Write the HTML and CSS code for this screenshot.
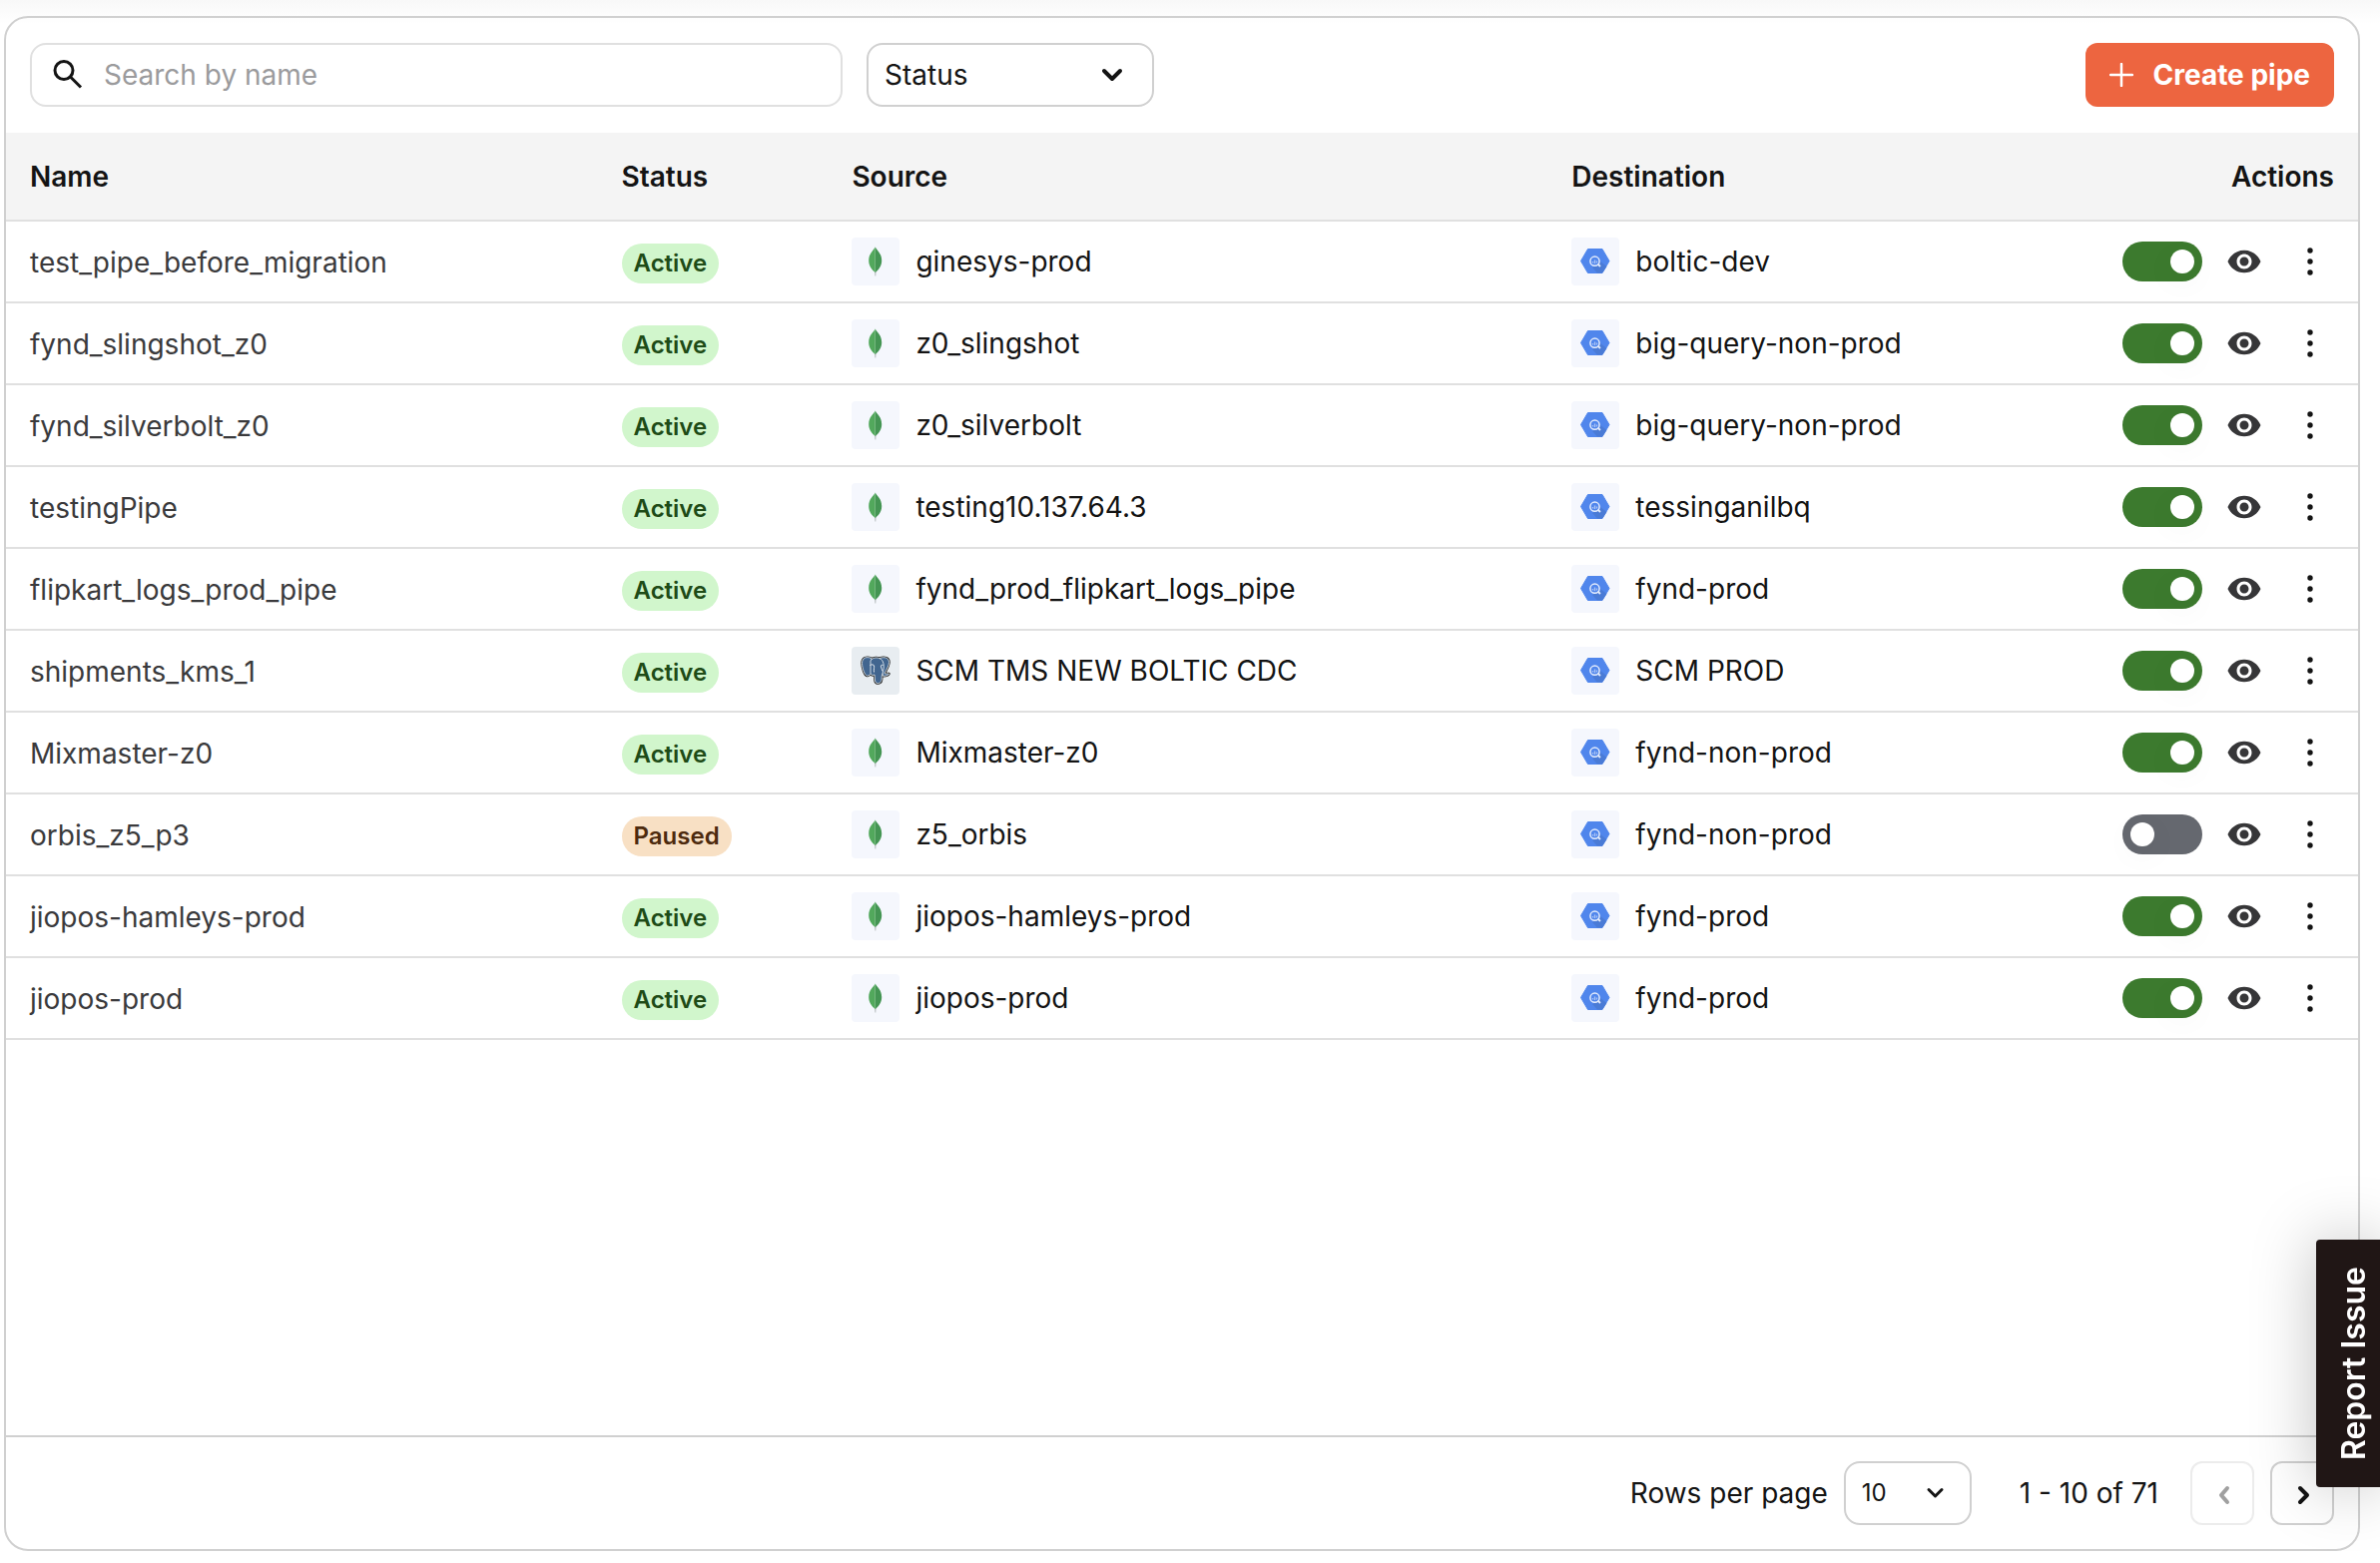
FILE: index.html
```html
<!DOCTYPE html>
<html lang="en">
<head>
<meta charset="utf-8">
<meta name="viewport" content="width=device-width, initial-scale=1">
<title>Pipes</title>
<link rel="stylesheet" href="styles.css">
</head>
<body>
<svg class="sprite" aria-hidden="true">
  <symbol id="mongo" viewBox="0 0 48 48">
    <path d="M23 34h1.600l-.3 4.500h-.9z" fill="#b9bec0"/>
    <path d="M23.700 9.500c1.500 3.500 6.500 6 6.500 13.500 0 6-3.500 9.500-6.500 12z" fill="#449553"/>
    <path d="M23.700 9.500c-1.500 3.500-6.500 6-6.500 13.500 0 6 3.500 9.500 6.500 12z" fill="#52a85c"/>
  </symbol>
  <symbol id="bigquery" viewBox="0 0 48 48">
    <path d="M16.500 11.500h14.500l7 12-7 12H16.500l-7-12z" fill="#5086ec" stroke="#5086ec" stroke-linejoin="round"/>
    <path d="M28 27l1-3 6.500 5-4.500 6.500h-5l-5-5.500z" fill="#4a7bd6"/>
    <circle cx="23.500" cy="23.700" r="4.600" fill="none" stroke="#e4ecfc" stroke-width="1.500"/>
    <path d="M26.500 26.500l2.500 2.500" stroke="#e4ecfc" stroke-width="1.800"/>
    <path d="M21.500 24v1.500M23.500 22.500v3.500M25.500 23.500v2" stroke="#a9c3f5" stroke-width="1.300"/>
  </symbol>
  <symbol id="postgres" viewBox="0 0 48 48">
    <g fill="#41658f" stroke="#1c1c1c" stroke-width="2.400" stroke-linejoin="round">
      <path d="M20 11.500c-5-2-9.500-.8-9.500 5 0 4.500 2.500 12 5 12.500 1.500.5 3.500-1.500 5-3z"/>
      <path d="M28 11.500c5-1.800 9.500-.5 9.500 4 0 3.500-2.300 7-4.500 11 1.300.8 3 .3 4.500.5-.8 2-3.500 2.300-6 2.300z"/>
      <path d="M19 14c2-4 9-4 11.500-.5 2.500 3.500 2 9 .5 13-.8 2-.8 3-.8 5.500 0 5.500-6.200 6-6.700 2l-.5-6c-2 1-4.500 0-4-2z"/>
    </g>
    <g fill="#41658f" stroke="#eef2f5" stroke-width=".8" stroke-linejoin="round">
      <path d="M20 11.500c-5-2-9.500-.8-9.500 5 0 4.500 2.500 12 5 12.500 1.500.5 3.500-1.500 5-3z"/>
      <path d="M28 11.500c5-1.800 9.500-.5 9.500 4 0 3.500-2.300 7-4.500 11 1.300.8 3 .3 4.500.5-.8 2-3.500 2.300-6 2.300z"/>
      <path d="M19 14c2-4 9-4 11.500-.5 2.500 3.500 2 9 .5 13-.8 2-.8 3-.8 5.500 0 5.500-6.200 6-6.700 2l-.5-6c-2 1-4.500 0-4-2z"/>
    </g>
    <path d="M18.500 18.500c1.500-1 3.500-1 4 .5s-.5 3.500 0 6.500M31.500 18.500c-1.500-.5-2.500 0-2 1.500.3 1.800 1.200 2.800 1.500 4.500" fill="none" stroke="#eef2f5" stroke-width=".9"/>
  </symbol>
  <symbol id="eye" viewBox="0 0 24 24">
    <path d="M12 4.500C7 4.500 2.730 7.610 1 12c1.730 4.390 6 7.500 11 7.500s9.270-3.110 11-7.500c-1.730-4.390-6-7.500-11-7.500zM12 17c-2.760 0-5-2.240-5-5s2.240-5 5-5 5 2.240 5 5-2.240 5-5 5zm0-8c-1.660 0-3 1.340-3 3s1.340 3 3 3 3-1.340 3-3-1.340-3-3-3z"/>
  </symbol>
  <symbol id="dots" viewBox="0 0 48 48">
    <circle cx="24" cy="13" r="2.700"/><circle cx="24" cy="24" r="2.700"/><circle cx="24" cy="35" r="2.700"/>
  </symbol>
</svg>

<main class="card">
  <div class="toolbar">
    <label class="search">
      <svg class="search-icon" viewBox="0 0 32 32" aria-hidden="true"><circle cx="12" cy="11.500" r="9" /><path d="M18.500 18l10.500 10.500"/></svg>
      <input class="search-input" type="text" placeholder="Search by name" aria-label="Search by name">
    </label>
    <div class="select select-status">
      <select aria-label="Status"><option>Status</option></select>
      <svg class="chevron" viewBox="0 0 24 24" aria-hidden="true"><path d="M4 8l8 8 8-8"/></svg>
    </div>
    <button class="create" type="button">
      <svg class="plus" viewBox="0 0 24 24" aria-hidden="true"><path d="M12 1v22M1 12h22"/></svg>
      Create pipe
    </button>
  </div>

  <div class="table-area">
    <table class="pipes">
      <colgroup><col class="col-name"><col class="col-status"><col class="col-source"><col class="col-dest"><col></colgroup>
      <thead>
        <tr><th>Name</th><th>Status</th><th>Source</th><th>Destination</th><th class="right">Actions</th></tr>
      </thead>
      <tbody>
        <tr>
          <td class="name">test_pipe_before_migration</td>
          <td><span class="badge active">Active</span></td>
          <td><div class="conn"><svg class="logo"><use href="#mongo"/></svg>ginesys-prod</div></td>
          <td><div class="conn"><svg class="logo"><use href="#bigquery"/></svg>boltic-dev</div></td>
          <td><div class="actions"><input class="toggle" type="checkbox" checked aria-label="Enable pipe"><button class="icon-btn view" type="button" aria-label="View"><svg><use href="#eye"/></svg></button><button class="icon-btn more" type="button" aria-label="More"><svg><use href="#dots"/></svg></button></div></td>
        </tr>
        <tr>
          <td class="name">fynd_slingshot_z0</td>
          <td><span class="badge active">Active</span></td>
          <td><div class="conn"><svg class="logo"><use href="#mongo"/></svg>z0_slingshot</div></td>
          <td><div class="conn"><svg class="logo"><use href="#bigquery"/></svg>big-query-non-prod</div></td>
          <td><div class="actions"><input class="toggle" type="checkbox" checked aria-label="Enable pipe"><button class="icon-btn view" type="button" aria-label="View"><svg><use href="#eye"/></svg></button><button class="icon-btn more" type="button" aria-label="More"><svg><use href="#dots"/></svg></button></div></td>
        </tr>
        <tr>
          <td class="name">fynd_silverbolt_z0</td>
          <td><span class="badge active">Active</span></td>
          <td><div class="conn"><svg class="logo"><use href="#mongo"/></svg>z0_silverbolt</div></td>
          <td><div class="conn"><svg class="logo"><use href="#bigquery"/></svg>big-query-non-prod</div></td>
          <td><div class="actions"><input class="toggle" type="checkbox" checked aria-label="Enable pipe"><button class="icon-btn view" type="button" aria-label="View"><svg><use href="#eye"/></svg></button><button class="icon-btn more" type="button" aria-label="More"><svg><use href="#dots"/></svg></button></div></td>
        </tr>
        <tr>
          <td class="name">testingPipe</td>
          <td><span class="badge active">Active</span></td>
          <td><div class="conn"><svg class="logo"><use href="#mongo"/></svg>testing10.137.64.3</div></td>
          <td><div class="conn"><svg class="logo"><use href="#bigquery"/></svg>tessinganilbq</div></td>
          <td><div class="actions"><input class="toggle" type="checkbox" checked aria-label="Enable pipe"><button class="icon-btn view" type="button" aria-label="View"><svg><use href="#eye"/></svg></button><button class="icon-btn more" type="button" aria-label="More"><svg><use href="#dots"/></svg></button></div></td>
        </tr>
        <tr>
          <td class="name">flipkart_logs_prod_pipe</td>
          <td><span class="badge active">Active</span></td>
          <td><div class="conn"><svg class="logo"><use href="#mongo"/></svg>fynd_prod_flipkart_logs_pipe</div></td>
          <td><div class="conn"><svg class="logo"><use href="#bigquery"/></svg>fynd-prod</div></td>
          <td><div class="actions"><input class="toggle" type="checkbox" checked aria-label="Enable pipe"><button class="icon-btn view" type="button" aria-label="View"><svg><use href="#eye"/></svg></button><button class="icon-btn more" type="button" aria-label="More"><svg><use href="#dots"/></svg></button></div></td>
        </tr>
        <tr>
          <td class="name">shipments_kms_1</td>
          <td><span class="badge active">Active</span></td>
          <td><div class="conn"><svg class="logo logo-pg"><use href="#postgres"/></svg>SCM TMS NEW BOLTIC CDC</div></td>
          <td><div class="conn"><svg class="logo"><use href="#bigquery"/></svg>SCM PROD</div></td>
          <td><div class="actions"><input class="toggle" type="checkbox" checked aria-label="Enable pipe"><button class="icon-btn view" type="button" aria-label="View"><svg><use href="#eye"/></svg></button><button class="icon-btn more" type="button" aria-label="More"><svg><use href="#dots"/></svg></button></div></td>
        </tr>
        <tr>
          <td class="name">Mixmaster-z0</td>
          <td><span class="badge active">Active</span></td>
          <td><div class="conn"><svg class="logo"><use href="#mongo"/></svg>Mixmaster-z0</div></td>
          <td><div class="conn"><svg class="logo"><use href="#bigquery"/></svg>fynd-non-prod</div></td>
          <td><div class="actions"><input class="toggle" type="checkbox" checked aria-label="Enable pipe"><button class="icon-btn view" type="button" aria-label="View"><svg><use href="#eye"/></svg></button><button class="icon-btn more" type="button" aria-label="More"><svg><use href="#dots"/></svg></button></div></td>
        </tr>
        <tr>
          <td class="name">orbis_z5_p3</td>
          <td><span class="badge paused">Paused</span></td>
          <td><div class="conn"><svg class="logo"><use href="#mongo"/></svg>z5_orbis</div></td>
          <td><div class="conn"><svg class="logo"><use href="#bigquery"/></svg>fynd-non-prod</div></td>
          <td><div class="actions"><input class="toggle" type="checkbox" aria-label="Enable pipe"><button class="icon-btn view" type="button" aria-label="View"><svg><use href="#eye"/></svg></button><button class="icon-btn more" type="button" aria-label="More"><svg><use href="#dots"/></svg></button></div></td>
        </tr>
        <tr>
          <td class="name">jiopos-hamleys-prod</td>
          <td><span class="badge active">Active</span></td>
          <td><div class="conn"><svg class="logo"><use href="#mongo"/></svg>jiopos-hamleys-prod</div></td>
          <td><div class="conn"><svg class="logo"><use href="#bigquery"/></svg>fynd-prod</div></td>
          <td><div class="actions"><input class="toggle" type="checkbox" checked aria-label="Enable pipe"><button class="icon-btn view" type="button" aria-label="View"><svg><use href="#eye"/></svg></button><button class="icon-btn more" type="button" aria-label="More"><svg><use href="#dots"/></svg></button></div></td>
        </tr>
        <tr>
          <td class="name">jiopos-prod</td>
          <td><span class="badge active">Active</span></td>
          <td><div class="conn"><svg class="logo"><use href="#mongo"/></svg>jiopos-prod</div></td>
          <td><div class="conn"><svg class="logo"><use href="#bigquery"/></svg>fynd-prod</div></td>
          <td><div class="actions"><input class="toggle" type="checkbox" checked aria-label="Enable pipe"><button class="icon-btn view" type="button" aria-label="View"><svg><use href="#eye"/></svg></button><button class="icon-btn more" type="button" aria-label="More"><svg><use href="#dots"/></svg></button></div></td>
        </tr>
      </tbody>
    </table>
  </div>

  <footer class="pager">
    <label for="rows">Rows per page</label>
    <div class="select select-rows">
      <select id="rows"><option>10</option></select>
      <svg class="chevron" viewBox="0 0 24 24" aria-hidden="true"><path d="M5 8.500l6.500 6.500L18 8.500"/></svg>
    </div>
    <span class="range">1 - 10 of 71</span>
    <div class="pages">
      <button class="page-btn" type="button" disabled aria-label="Previous page"><svg viewBox="0 0 24 24"><path d="M15 5l-6 7 6 7"/></svg></button>
      <button class="page-btn" type="button" aria-label="Next page"><svg viewBox="0 0 24 24"><path d="M8 5l7 7-7 7"/></svg></button>
    </div>
  </footer>
</main>
<button class="report" type="button">Report Issue</button>
</body>
</html>
```
FILE: styles.css
```css
*, *::before, *::after { box-sizing: border-box; }

body {
  margin: 0;
  min-height: 100vh;
  padding: 16px 20px 12px 4px;
  display: flex;
  flex-direction: column;
  background: #fff linear-gradient(#f8f8f8, #fff 24px) no-repeat;
  color: #141414;
  font: 400 28px/36px Inter, "Liberation Sans", sans-serif;
}

button, input, select { font: inherit; color: inherit; }
button { cursor: pointer; }
.sprite { display: none; }

.card {
  flex: 1;
  display: flex;
  flex-direction: column;
  border: 2px solid #d0d0d0;
  border-radius: 24px;
  overflow: hidden;
}

/* Toolbar */
.toolbar {
  display: flex;
  align-items: center;
  gap: 24px;
  padding: 25px 24px 26px;
}

.search {
  flex: 0 1 814px;
  display: flex;
  align-items: center;
  gap: 20px;
  height: 64px;
  padding: 0 20px;
  border: 2px solid #e0e0e0;
  border-radius: 16px;
  background: #fff;
}
.search-icon {
  flex: none;
  width: 32px;
  height: 32px;
  fill: none;
  stroke: #141414;
  stroke-width: 3;
}
.search-input {
  flex: 1;
  min-width: 0;
  padding: 0;
  border: 0;
  outline: 0;
  background: none;
}
.search-input::placeholder { color: #9b9b9d; opacity: 1; }

.select { display: grid; align-items: center; }
.select > * { grid-area: 1 / 1; }
.select select {
  appearance: none;
  width: 100%;
  height: 64px;
  padding: 0 16px;
  border: 2px solid #d0d0d0;
  border-radius: 16px;
  background: none;
}
.chevron {
  justify-self: end;
  pointer-events: none;
  fill: none;
  stroke: #141414;
  stroke-linecap: round;
  stroke-linejoin: round;
}
.select-status { width: 288px; }
.select-status .chevron { width: 24px; height: 24px; margin-right: 30px; stroke-width: 4; }

.create {
  display: flex;
  align-items: center;
  gap: 20px;
  height: 64px;
  margin-left: auto;
  padding: 0 24px;
  border: 0;
  border-radius: 12px;
  background: #ed6540;
  color: #fff;
  font-weight: 700;
}
.plus { width: 24px; height: 24px; fill: none; stroke: #fff; stroke-width: 2.5; stroke-linecap: round; }

/* Table */
.table-area { flex: 1; }
.pipes { width: 100%; table-layout: fixed; border-collapse: separate; border-spacing: 0; }
.col-name { width: 25.15%; }
.col-status { width: 9.8%; }
.col-source { width: 30.6%; }
.col-dest { width: 20%; }
.pipes th, .pipes td {
  padding: 0 24px;
  border-bottom: 2px solid #e0e0e0;
  text-align: left;
  white-space: nowrap;
}
.pipes th { height: 89px; background: #f4f4f4; font-weight: 600; }
.pipes td { height: 82px; }
.pipes th.right { text-align: right; }
.pipes .name { padding-top: 2px; color: #3a3a3c; }

.badge {
  display: block;
  width: fit-content;
  margin-top: 4px;
  padding: 0 12px;
  border-radius: 20px;
  font-size: 24px;
  font-weight: 600;
  line-height: 40px;
}
.active { background: #d1f6cc; color: #1e4b17; }
.paused { background: #f8e0c4; color: #4d2a0e; }

.conn { display: flex; align-items: center; gap: 16px; }
.logo { width: 48px; height: 48px; border-radius: 4px; background: #f5f7fd; }
.logo-pg { background: #e8edf1; }

.actions { display: flex; align-items: center; justify-content: flex-end; gap: 24px; }
.toggle {
  appearance: none;
  display: flex;
  align-items: center;
  width: 80px;
  height: 40px;
  margin: 0;
  padding: 0 8px;
  border-radius: 20px;
  background: #65686f;
}
.toggle::before {
  content: "";
  width: 24px;
  height: 24px;
  border-radius: 50%;
  background: #fff;
  box-shadow: 0 8px 32px rgb(0 0 0 / 6%);
}
.toggle:checked { justify-content: flex-end; background: #3c7a2e; }
.icon-btn { display: block; padding: 0; border: 0; background: none; }
.icon-btn svg { display: block; width: 100%; height: 100%; fill: currentColor; }
.view { width: 36px; height: 36px; color: #363638; }
.more { width: 48px; height: 48px; }

/* Pager */
.pager {
  display: flex;
  align-items: center;
  justify-content: flex-end;
  padding: 24px;
  border-top: 2px solid #d0d0d0;
}
.select-rows { width: 128px; margin: 0 48px 0 16px; }
.select-rows select { font-size: 24px; }
.select-rows .chevron { width: 24px; height: 24px; margin-right: 24px; stroke-width: 3; }
.pages { display: flex; gap: 16px; margin-left: 32px; }
.page-btn {
  display: grid;
  place-items: center;
  width: 64px;
  height: 64px;
  padding: 4px 0 0 4px;
  border: 2px solid #d0d0d0;
  border-radius: 12px;
  background: none;
}
.page-btn:disabled { opacity: .4; }
.page-btn svg { width: 24px; height: 24px; fill: none; stroke: #141414; stroke-width: 4; stroke-linecap: round; stroke-linejoin: round; }

/* Tab pinned over the right edge of the window */
.report {
  position: fixed;
  right: 0;
  bottom: 76px;
  width: 64px;
  height: 248px;
  padding: 0 0 0 12px;
  border: 0;
  border-radius: 4px 0 0 4px;
  background: #201615;
  color: #fff;
  box-shadow: 0 0 64px rgb(0 0 0 / 25%);
  font-size: 32px;
  font-weight: 600;
  line-height: 48px;
  writing-mode: sideways-lr;
  white-space: nowrap;
}
```
